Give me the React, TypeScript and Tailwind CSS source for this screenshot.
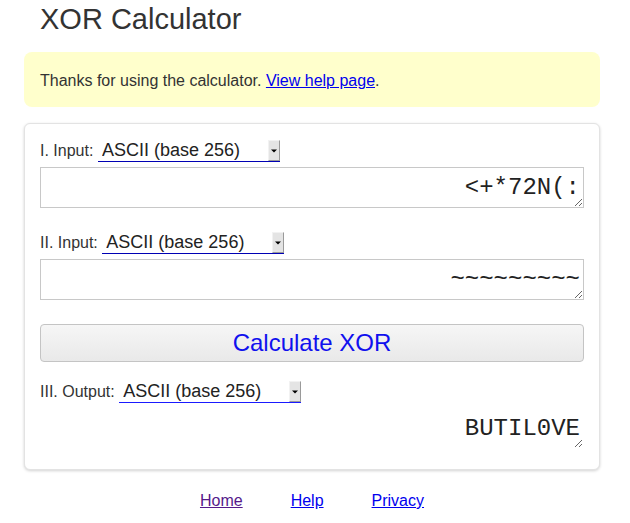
import React from 'react';

const sans = { fontFamily: '"Liberation Sans", Arial, sans-serif' };

function EncodingSelect({ underline }: { underline: string }) {
  return (
    <span className="relative inline-block w-[182px] h-[22px]">
      <select
        defaultValue="ascii"
        className={`appearance-none block w-full h-full bg-white border-0 border-b ${underline} rounded-none pl-[4px] text-[18px] leading-[21px] text-[#222] outline-none`}
        style={sans}
      >
        <option value="ascii">ASCII (base 256)</option>
        <option value="hex">Hexadecimal (base 16)</option>
        <option value="bin">Binary (base 2)</option>
      </select>
      <span className="pointer-events-none absolute right-0 top-0 w-[12px] h-[21px] bg-[#e4e4e4] border border-[#9a9a9a] border-l-[#f2f2f2] border-t-[#f2f2f2] flex items-center justify-center">
        <svg width="6" height="4" viewBox="0 0 6 4">
          <path d="M0 0.5h6L3 3.5z" fill="#000" />
        </svg>
      </span>
    </span>
  );
}

function Field({ value, bordered = true }: { value: string; bordered?: boolean }) {
  return (
    <textarea
      readOnly
      value={value}
      rows={1}
      className={`block w-full h-[41px] mt-[5px] py-[6px] pl-[3px] pr-[3px] text-right text-[24px] leading-[27px] text-[#222] bg-white outline-none resize overflow-hidden whitespace-nowrap ${
        bordered ? 'border border-[#c8c8c8]' : 'border border-transparent'
      }`}
      style={{ fontFamily: '"Liberation Mono", "Courier New", monospace' }}
    />
  );
}

export default function App() {
  return (
    <div className="min-h-screen bg-white text-[#333]" style={sans}>
      <div className="ml-6 w-[576px]">
        <h1 className="mt-[3px] pl-4 text-[29px] leading-[33px] font-normal text-[#333]">XOR Calculator</h1>

        <div className="mt-[16px] h-[55px] flex items-center px-4 pt-[3px] rounded-[8px] bg-[#ffffcc] text-[16px]">
          <p>
            Thanks for using the calculator.{' '}
            <a href="#help" className="text-[#0000ee] underline">
              View help page
            </a>
            .
          </p>
        </div>

        {/* Calculator card */}
        <div className="mt-[16px] bg-white border border-[#e3e3e3] rounded-[6px] shadow-[0_1px_3px_rgba(0,0,0,0.18)] px-[15px] pt-4 pb-[20px]">
          <div className="flex items-center gap-[4.5px] text-[16px] h-[22px]">
            <span>I. Input:</span>
            <EncodingSelect underline="border-[#0000b4]" />
          </div>
          <Field value="<+*72N(:" />

          <div className="mt-[24px] flex items-center gap-[4.5px] text-[16px] h-[22px]">
            <span>II. Input:</span>
            <EncodingSelect underline="border-[#0000b4]" />
          </div>
          <Field value="~~~~~~~~~" />

          <button
            type="button"
            className="mt-[24px] w-full h-[38px] rounded-[4px] border border-[#c4c4c4] bg-gradient-to-b from-[#f6f6f6] to-[#e9e9e9] text-[24px] text-[#1010ee]"
            style={sans}
          >
            Calculate XOR
          </button>

          <div className="mt-[19px] flex items-center gap-[4.5px] text-[16px] h-[22px]">
            <span>III. Output:</span>
            <EncodingSelect underline="border-[#1a1aff]" />
          </div>
          <Field value="BUTIL0VE" bordered={false} />
        </div>

        <div className="mt-[22px] flex justify-center gap-[48px] text-[16px] leading-[18px]">
          <a href="#home" className="text-[#551a8b] underline">
            Home
          </a>
          <a href="#help" className="text-[#0000ee] underline">
            Help
          </a>
          <a href="#privacy" className="text-[#0000ee] underline">
            Privacy
          </a>
        </div>
      </div>
    </div>
  );
}
